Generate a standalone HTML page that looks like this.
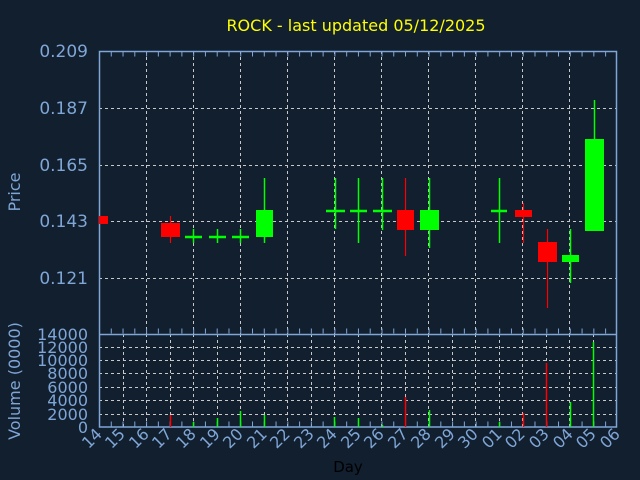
<!DOCTYPE html>
<html><head><style>
html,body{margin:0;padding:0;background:#111f2f;}
svg{display:block;font-family:"DejaVu Sans","Liberation Sans",sans-serif;}
</style></head><body>
<svg width="640" height="480" viewBox="0 0 640 480" xmlns="http://www.w3.org/2000/svg">
<rect width="640" height="480" fill="#111f2f"/>
<text x="356" y="31" fill="#ffff00" font-size="16" text-anchor="middle">ROCK - last updated 05/12/2025</text>
<g stroke="#c8c8c8" stroke-width="1" stroke-dasharray="3,3" fill="none">
<line x1="99" y1="108.5" x2="617" y2="108.5"/>
<line x1="99" y1="165.5" x2="617" y2="165.5"/>
<line x1="99" y1="221.5" x2="617" y2="221.5"/>
<line x1="99" y1="278.5" x2="617" y2="278.5"/>
<line x1="146.5" y1="51" x2="146.5" y2="334"/>
<line x1="193.5" y1="51" x2="193.5" y2="334"/>
<line x1="240.5" y1="51" x2="240.5" y2="334"/>
<line x1="287.5" y1="51" x2="287.5" y2="334"/>
<line x1="334.5" y1="51" x2="334.5" y2="334"/>
<line x1="381.5" y1="51" x2="381.5" y2="334"/>
<line x1="428.5" y1="51" x2="428.5" y2="334"/>
<line x1="475.5" y1="51" x2="475.5" y2="334"/>
<line x1="522.5" y1="51" x2="522.5" y2="334"/>
<line x1="569.5" y1="51" x2="569.5" y2="334"/>
<line x1="99" y1="347.5" x2="617" y2="347.5"/>
<line x1="99" y1="360.5" x2="617" y2="360.5"/>
<line x1="99" y1="373.5" x2="617" y2="373.5"/>
<line x1="99" y1="387.5" x2="617" y2="387.5"/>
<line x1="99" y1="400.5" x2="617" y2="400.5"/>
<line x1="99" y1="414.5" x2="617" y2="414.5"/>
<line x1="123.5" y1="334" x2="123.5" y2="427"/><line x1="146.5" y1="334" x2="146.5" y2="427"/>
<line x1="170.5" y1="334" x2="170.5" y2="427"/><line x1="193.5" y1="334" x2="193.5" y2="427"/>
<line x1="217.5" y1="334" x2="217.5" y2="427"/><line x1="240.5" y1="334" x2="240.5" y2="427"/>
<line x1="264.5" y1="334" x2="264.5" y2="427"/><line x1="287.5" y1="334" x2="287.5" y2="427"/>
<line x1="311.5" y1="334" x2="311.5" y2="427"/><line x1="334.5" y1="334" x2="334.5" y2="427"/>
<line x1="358.5" y1="334" x2="358.5" y2="427"/><line x1="381.5" y1="334" x2="381.5" y2="427"/>
<line x1="405.5" y1="334" x2="405.5" y2="427"/><line x1="428.5" y1="334" x2="428.5" y2="427"/>
<line x1="452.5" y1="334" x2="452.5" y2="427"/><line x1="475.5" y1="334" x2="475.5" y2="427"/>
<line x1="499.5" y1="334" x2="499.5" y2="427"/><line x1="522.5" y1="334" x2="522.5" y2="427"/>
<line x1="546.5" y1="334" x2="546.5" y2="427"/><line x1="569.5" y1="334" x2="569.5" y2="427"/>
<line x1="593.5" y1="334" x2="593.5" y2="427"/>
</g>
<g stroke="#7fa6d6" stroke-width="1.5" fill="none">
<rect x="99.5" y="51.5" width="517" height="375.5"/>
<line x1="99" y1="334.5" x2="617" y2="334.5"/>
</g>
<g stroke="#7fa6d6" stroke-width="1" fill="none" stroke-dasharray="1,10.77" stroke-dashoffset="-11.77">
<line x1="99" y1="54" x2="617" y2="54" stroke-dasharray="1,10.77" stroke-width="5"/>
<line x1="99" y1="331" x2="617" y2="331" stroke-width="5"/>
<line x1="99" y1="424" x2="617" y2="424" stroke-width="5"/>
</g>
<!-- candles -->
<g stroke-width="1.2">
<rect x="99" y="216" width="9" height="8" fill="#ff0000"/>
<line x1="170.5" y1="216" x2="170.5" y2="243" stroke="#ff0000"/>
<rect x="161" y="223" width="19" height="14" fill="#ff0000"/>
<g stroke="#00ff00" stroke-width="1.5">
<line x1="193.5" y1="229" x2="193.5" y2="243"/><line x1="185" y1="237" x2="202" y2="237" stroke-width="2.5"/>
<line x1="217.5" y1="229" x2="217.5" y2="243"/><line x1="209" y1="237" x2="226" y2="237" stroke-width="2.5"/>
<line x1="240.5" y1="229" x2="240.5" y2="243"/><line x1="232" y1="237" x2="249" y2="237" stroke-width="2.5"/>
<line x1="264.5" y1="178" x2="264.5" y2="243"/>
<line x1="335.5" y1="178" x2="335.5" y2="229"/><line x1="326" y1="211" x2="345" y2="211" stroke-width="2.5"/>
<line x1="358.5" y1="178" x2="358.5" y2="243"/><line x1="350" y1="211" x2="367" y2="211" stroke-width="2.5"/>
<line x1="382.5" y1="178" x2="382.5" y2="230"/><line x1="373" y1="211" x2="392" y2="211" stroke-width="2.5"/>
<line x1="429.5" y1="178" x2="429.5" y2="248"/>
<line x1="499.5" y1="178" x2="499.5" y2="243"/><line x1="491" y1="211" x2="507" y2="211" stroke-width="2.5"/>
<line x1="570.5" y1="229" x2="570.5" y2="283"/>
<line x1="594.5" y1="100" x2="594.5" y2="139"/>
</g>
<rect x="256" y="210" width="17" height="27" fill="#00ff00"/>
<line x1="405.5" y1="178" x2="405.5" y2="256" stroke="#ff0000"/>
<rect x="397" y="210" width="17" height="20" fill="#ff0000"/>
<rect x="420" y="210" width="19" height="20" fill="#00ff00"/>
<line x1="523.5" y1="203" x2="523.5" y2="243" stroke="#ff0000"/>
<rect x="515" y="210" width="17" height="7" fill="#ff0000"/>
<line x1="547.5" y1="229" x2="547.5" y2="308" stroke="#ff0000"/>
<rect x="538" y="242" width="19" height="20" fill="#ff0000"/>
<rect x="562" y="255" width="17" height="7" fill="#00ff00"/>
<rect x="585" y="139" width="19" height="92" fill="#00ff00"/>
</g>
<!-- volume -->
<g stroke-width="1.5">
<line x1="170.5" y1="415" x2="170.5" y2="427" stroke="#ff0000"/>
<line x1="193.5" y1="422" x2="193.5" y2="427" stroke="#00ff00"/>
<line x1="217.5" y1="418" x2="217.5" y2="427" stroke="#00ff00"/>
<line x1="240.5" y1="411" x2="240.5" y2="427" stroke="#00ff00"/>
<line x1="264.5" y1="415" x2="264.5" y2="427" stroke="#00ff00"/>
<line x1="334.5" y1="417" x2="334.5" y2="427" stroke="#00ff00"/>
<line x1="358.5" y1="418" x2="358.5" y2="427" stroke="#00ff00"/>
<line x1="382.5" y1="425" x2="382.5" y2="427" stroke="#00ff00"/>
<line x1="405.5" y1="397" x2="405.5" y2="427" stroke="#ff0000"/>
<line x1="429.5" y1="410" x2="429.5" y2="427" stroke="#00ff00"/>
<line x1="499.5" y1="422" x2="499.5" y2="427" stroke="#00ff00"/>
<line x1="523.5" y1="413" x2="523.5" y2="427" stroke="#ff0000"/>
<line x1="546.5" y1="363" x2="546.5" y2="427" stroke="#ff0000"/>
<line x1="570.5" y1="402" x2="570.5" y2="427" stroke="#00ff00"/>
<line x1="593.5" y1="342" x2="593.5" y2="427" stroke="#00ff00"/>
</g>
<g fill="#7fa6d6" font-size="17" text-anchor="end">
<text x="88" y="57">0.209</text>
<text x="88" y="114">0.187</text>
<text x="88" y="171">0.165</text>
<text x="88" y="227">0.143</text>
<text x="88" y="284">0.121</text>
</g>
<g fill="#7fa6d6" font-size="16" text-anchor="end">
<text x="88" y="340">14000</text>
<text x="88" y="353">12000</text>
<text x="88" y="366">10000</text>
<text x="88" y="379">8000</text>
<text x="88" y="393">6000</text>
<text x="88" y="406">4000</text>
<text x="88" y="420">2000</text>
<text x="88" y="433">0</text>
</g>
<text transform="translate(20,192) rotate(-90)" fill="#7fa6d6" font-size="16" text-anchor="middle">Price</text>
<text transform="translate(20,381) rotate(-90)" fill="#7fa6d6" font-size="16" text-anchor="middle">Volume (0000)</text>
<g fill="#7fa6d6" font-size="16" text-anchor="end">
<text transform="translate(103,435) rotate(-45)">14</text>
<text transform="translate(126,435) rotate(-45)">15</text>
<text transform="translate(150,435) rotate(-45)">16</text>
<text transform="translate(173,435) rotate(-45)">17</text>
<text transform="translate(197,435) rotate(-45)">18</text>
<text transform="translate(221,435) rotate(-45)">19</text>
<text transform="translate(244,435) rotate(-45)">20</text>
<text transform="translate(268,435) rotate(-45)">21</text>
<text transform="translate(291,435) rotate(-45)">22</text>
<text transform="translate(315,435) rotate(-45)">23</text>
<text transform="translate(338,435) rotate(-45)">24</text>
<text transform="translate(362,435) rotate(-45)">25</text>
<text transform="translate(385,435) rotate(-45)">26</text>
<text transform="translate(409,435) rotate(-45)">27</text>
<text transform="translate(432,435) rotate(-45)">28</text>
<text transform="translate(456,435) rotate(-45)">29</text>
<text transform="translate(479,435) rotate(-45)">30</text>
<text transform="translate(503,435) rotate(-45)">01</text>
<text transform="translate(526,435) rotate(-45)">02</text>
<text transform="translate(550,435) rotate(-45)">03</text>
<text transform="translate(574,435) rotate(-45)">04</text>
<text transform="translate(597,435) rotate(-45)">05</text>
<text transform="translate(621,435) rotate(-45)">06</text>
</g>
<text x="348" y="472" fill="#000000" font-size="15" text-anchor="middle">Day</text>
</svg>
</body></html>
